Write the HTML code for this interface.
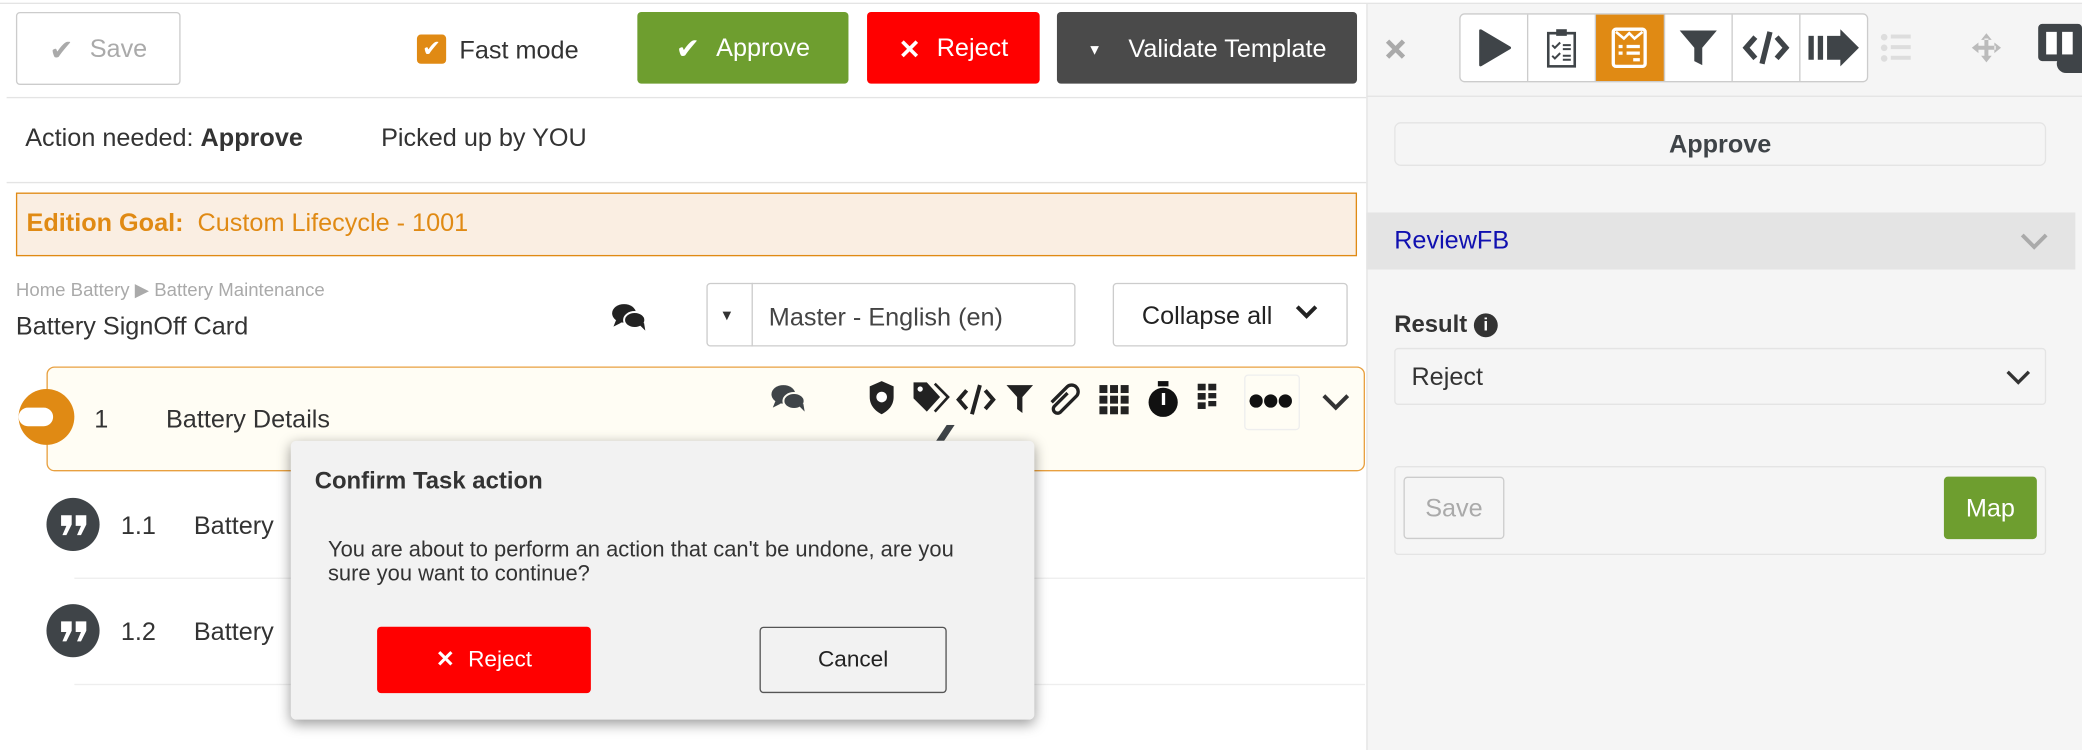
<!DOCTYPE html>
<html><head><meta charset="utf-8"><style>
html,body{margin:0;padding:0;width:2082px;height:750px;overflow:hidden;background:#fff;font-family:"Liberation Sans",sans-serif;color:#333}
#w{position:absolute;left:0;top:0;width:1568px;height:565px;transform:scale(1.32781);transform-origin:0 0;background:#fff}
.a{position:absolute}
.btn{position:absolute;border-radius:3px;display:flex;align-items:center;justify-content:center;font-size:19px;color:#fff;box-sizing:border-box}
svg{display:block}
</style></head><body><div id="w">
<div class="a" style="left:0;top:2px;width:1568px;height:1px;background:#e4e4e4"></div>
<div class="btn" style="left:12px;top:9px;width:124px;height:55px;border:1px solid #ccc;color:#aaa;padding-top:2px"><span style="font-size:22px;margin-right:12px">✔</span>Save</div>
<div class="a" style="left:314px;top:26px;width:22px;height:22px;background:#e08a14;border-radius:3px;color:#fff;font-size:17px;line-height:22px;text-align:center">✔</div>
<div class="a" style="left:346px;top:28px;font-size:19px;color:#333">Fast mode</div>
<div class="btn" style="left:480px;top:9px;width:159px;height:54px;background:#6e9e2f;padding-top:2px"><span style="font-size:22px;margin-right:12px">✔</span>Approve</div>
<div class="btn" style="left:653px;top:9px;width:130px;height:54px;background:#ff0000;padding-top:2px"><span style="font-size:20px;margin-right:12px;font-weight:bold">✕</span>Reject</div>
<div class="btn" style="left:796px;top:9px;width:226px;height:54px;background:#4a4a4a;padding-top:3px"><span style="font-size:11px;margin-right:20px">▼</span>Validate Template</div>
<div class="a" style="left:5px;top:73px;width:1024px;height:1px;background:#e4e4e4"></div>
<div class="a" style="left:19px;top:94px;font-size:19px">Action needed: <b>Approve</b></div>
<div class="a" style="left:287px;top:94px;font-size:19px">Picked up by YOU</div>
<div class="a" style="left:5px;top:137px;width:1024px;height:1px;background:#e4e4e4"></div>
<div class="a" style="left:12px;top:145px;width:1008px;height:46px;background:#faeee2;border:1px solid #e08a14"></div>
<div class="a" style="left:20px;top:158px;font-size:19px;color:#e08a14"><b>Edition Goal:</b>&nbsp; Custom Lifecycle - 1001</div>
<div class="a" style="left:12px;top:210px;font-size:14px;color:#aaa">Home Battery ▶ Battery Maintenance</div>
<div class="a" style="left:12px;top:236px;font-size:19px;color:#333">Battery SignOff Card</div>
<svg class="a" style="left:460px;top:228px" width="28" height="22"><ellipse cx="10" cy="8" rx="9" ry="7" fill="#222"/><path d="M4 13l-2 5 6-3Z" fill="#222"/><ellipse cx="18" cy="13" rx="8" ry="6" fill="#222" stroke="#fff" stroke-width="1.5"/><path d="M22 17l4 4-1-6Z" fill="#222"/></svg>
<div class="a" style="left:532px;top:213px;width:278px;height:48px;border:1px solid #ccc;border-radius:3px;box-sizing:border-box"></div>
<div class="a" style="left:566px;top:213px;width:1px;height:48px;background:#ccc"></div>
<div class="a" style="left:542px;top:232px;font-size:11px">▼</div>
<div class="a" style="left:579px;top:229px;font-size:19px;color:#444">Master - English (en)</div>
<div class="a" style="left:838px;top:213px;width:177px;height:48px;border:1px solid #ccc;border-radius:3px;box-sizing:border-box;font-size:19px;color:#222;padding:14px 0 0 21px">Collapse all</div>
<svg class="a" style="left:975px;top:229px" width="18" height="12"><path d="M2 2l7 7 7-7" stroke="#222" stroke-width="3" fill="none"/></svg>
<div class="a" style="left:35px;top:276px;width:993px;height:79px;background:#fffdf4;border:1px solid #e8a040;border-radius:6px;box-sizing:border-box"></div>
<div class="a" style="left:14px;top:293px;width:42px;height:42px;border-radius:50%;background:#e08a14"></div>
<div class="a" style="left:14px;top:307px;width:26px;height:14px;border-radius:7px;background:#fff"></div>
<div class="a" style="left:71px;top:306px;font-size:19px">1</div>
<div class="a" style="left:125px;top:306px;font-size:19px">Battery Details</div>
<svg class="a" style="left:580px;top:289px" width="28" height="22"><ellipse cx="10" cy="8" rx="9" ry="7" fill="#3f4448"/><path d="M4 13l-2 5 6-3Z" fill="#3f4448"/><ellipse cx="18" cy="13" rx="8" ry="6" fill="#3f4448" stroke="#fffdf4" stroke-width="1.5"/><path d="M22 17l4 4-1-6Z" fill="#3f4448"/></svg>
<svg class="a" style="left:652px;top:286px" width="275" height="30">
<path d="M3 5l9-4 9 4v8c0 7-5 11-9 13-4-2-9-6-9-13Z" fill="#222"/><circle cx="12" cy="13" r="4" fill="#fff"/>
<path d="M36 2h10l10 11-10 11-10-10Z" fill="#222"/><circle cx="41" cy="7" r="2" fill="#fff"/><path d="M52 3l10 10-10 11" stroke="#222" stroke-width="2" fill="none"/>
<path d="M76 8l-6 7 6 7M90 8l6 7-6 7M86 4l-6 22" stroke="#222" stroke-width="3" fill="none"/>
<path d="M106 4h20l-8 9v12l-4-3v-9Z" fill="#222"/>
<path d="M152 10l-10 10a3 3 0 0 0 5 4l12-12a5 5 0 0 0-7-7L140 17" stroke="#222" stroke-width="2.5" fill="none"/>
<g fill="#222"><rect x="176" y="4" width="6" height="6"/><rect x="184" y="4" width="6" height="6"/><rect x="192" y="4" width="6" height="6"/><rect x="176" y="12" width="6" height="6"/><rect x="184" y="12" width="6" height="6"/><rect x="192" y="12" width="6" height="6"/><rect x="176" y="20" width="6" height="6"/><rect x="184" y="20" width="6" height="6"/><rect x="192" y="20" width="6" height="6"/></g>
<circle cx="224" cy="17" r="11" fill="#111"/><rect x="220" y="1" width="8" height="4" fill="#111"/><rect x="223" y="10" width="2.5" height="9" fill="#fff"/>
<g fill="#222"><rect x="250" y="3" width="6" height="5"/><rect x="258" y="3" width="6" height="5"/><rect x="250" y="10" width="6" height="5"/><rect x="258" y="10" width="6" height="4"/><rect x="258" y="16" width="6" height="4"/><rect x="250" y="17" width="6" height="5"/></g>
</svg>
<div class="a" style="left:937px;top:282px;width:40px;height:40px;border:1px solid #eee;border-radius:3px;background:#fffdf4"></div>
<svg class="a" style="left:941px;top:296px" width="32" height="12"><circle cx="5" cy="6" r="5" fill="#111"/><circle cx="16" cy="6" r="5" fill="#111"/><circle cx="27" cy="6" r="5" fill="#111"/></svg>
<svg class="a" style="left:995px;top:296px" width="22" height="14"><path d="M2 2l9 9 9-9" stroke="#333" stroke-width="3" fill="none"/></svg>
<svg class="a" style="left:697px;top:320px" width="24" height="12"><path d="M8 12l8-12h6l-8 12Z" fill="#3f4448"/></svg>
<div class="a" style="left:35px;top:375px;width:40px;height:40px;border-radius:50%;background:#3f4448"></div>
<svg class="a" style="left:45px;top:386px" width="22" height="18"><path d="M1 2h8v7l-4 8H2l3-7H1ZM12 2h8v7l-4 8h-3l3-7h-4Z" fill="#fff"/></svg>
<div class="a" style="left:91px;top:386px;font-size:19px">1.1</div>
<div class="a" style="left:146px;top:386px;font-size:19px">Battery</div>
<div class="a" style="left:56px;top:435px;width:972px;height:1px;background:#eee"></div>
<div class="a" style="left:35px;top:455px;width:40px;height:40px;border-radius:50%;background:#3f4448"></div>
<svg class="a" style="left:45px;top:466px" width="22" height="18"><path d="M1 2h8v7l-4 8H2l3-7H1ZM12 2h8v7l-4 8h-3l3-7h-4Z" fill="#fff"/></svg>
<div class="a" style="left:91px;top:466px;font-size:19px">1.2</div>
<div class="a" style="left:146px;top:466px;font-size:19px">Battery</div>
<div class="a" style="left:56px;top:515px;width:972px;height:1px;background:#eee"></div>
<div class="a" style="left:219px;top:332px;width:560px;height:210px;background:#f2f2f2;border-radius:4px;box-shadow:0 3px 10px rgba(0,0,0,.4)">
<div class="a" style="left:18px;top:20px;font-size:18px;font-weight:bold;color:#333">Confirm Task action</div>
<div class="a" style="left:28px;top:73px;width:495px;font-size:16.5px;line-height:18px;color:#333">You are about to perform an action that can't be undone, are you sure you want to continue?</div>
<div class="btn" style="left:65px;top:140px;width:161px;height:50px;background:#ff0000;font-size:17px"><b style="margin-right:10px">✕</b>Reject</div>
<div class="btn" style="left:353px;top:140px;width:141px;height:50px;border:1px solid #555;color:#222;font-size:17px;background:#f2f2f2">Cancel</div>
</div>
<div class="a" style="left:1029px;top:3px;width:539px;height:562px;background:#f5f5f5;border-left:1px solid #e4e4e4"></div>
<div class="a" style="left:1029px;top:72px;width:539px;height:1px;background:#e4e4e4"></div>
<svg class="a" style="left:1043px;top:29px" width="16" height="16"><path d="M2 2l12 12M14 2L2 14" stroke="#aaa" stroke-width="3.5"/></svg>
<div class="a" style="left:1099px;top:10px;width:308px;height:52px;background:#fff;border:1px solid #ccc;border-radius:4px;box-sizing:border-box;display:flex">
<div style="flex:1;border-right:1px solid #ccc;display:flex;align-items:center;justify-content:center"><svg width="26" height="28"><path d="M3 1 L25 14 L3 27Z" fill="#3f4448" stroke="#3f4448" stroke-linejoin="round" stroke-width="2"/></svg></div>
<div style="flex:1;border-right:1px solid #ccc;display:flex;align-items:center;justify-content:center"><svg width="22" height="30"><rect x="1" y="4" width="20" height="25" fill="#fff" stroke="#3f4448" stroke-width="2"/><rect x="7" y="1" width="8" height="5" fill="#3f4448"/><path d="M4 13l2 2 4-4M4 21l2 2 4-4" stroke="#3f4448" fill="none" stroke-width="1.5"/><path d="M12 13h6M12 16h6M12 21h6M12 24h6" stroke="#3f4448" stroke-width="1.5"/></svg></div>
<div style="flex:1;border-right:1px solid #ccc;background:#e08a14;display:flex;align-items:center;justify-content:center"><svg width="28" height="32"><rect x="2" y="2" width="24" height="28" rx="2" fill="none" stroke="#fff" stroke-width="2.5"/><path d="M4 4l6 5 4-4 4 4 6-5" stroke="#fff" fill="none" stroke-width="2"/><path d="M6 15h3M12 15h10M6 20h3M12 20h10M17 25h5" stroke="#fff" stroke-width="2.5"/></svg></div>
<div style="flex:1;border-right:1px solid #ccc;display:flex;align-items:center;justify-content:center"><svg width="30" height="30"><path d="M1 2h28L18 15v13l-6-3V15Z" fill="#3f4448"/></svg></div>
<div style="flex:1;border-right:1px solid #ccc;display:flex;align-items:center;justify-content:center"><svg width="36" height="30"><path d="M10 7L3 15l7 8M26 7l7 8-7 8M21 3L15 27" stroke="#3f4448" stroke-width="4" fill="none"/></svg></div>
<div style="flex:1;display:flex;align-items:center;justify-content:center"><svg width="40" height="30"><rect x="1" y="6" width="4" height="18" fill="#3f4448"/><rect x="8" y="6" width="4" height="18" fill="#3f4448"/><path d="M15 6h10V1l14 14-14 14v-5H15Z" fill="#3f4448"/></svg></div>
</div>
<svg class="a" style="left:1416px;top:25px" width="24" height="22"><g fill="#ddd"><circle cx="3" cy="3" r="2.5"/><circle cx="3" cy="11" r="2.5"/><circle cx="3" cy="19" r="2.5"/><rect x="8" y="1" width="15" height="3"/><rect x="8" y="9" width="15" height="3"/><rect x="8" y="17" width="15" height="3"/></g></svg>
<svg class="a" style="left:1484px;top:24px" width="24" height="24"><path d="M12 1l-4 5h8ZM12 23l-4-5h8ZM1 12l5-4v8ZM23 12l-5-4v8Z M10.5 5h3v14h-3Z M5 10.5h14v3H5Z" fill="#bbb"/></svg>
<div class="a" style="left:1535px;top:18px;width:33px;height:28px;background:#3f4448;border-radius:3px"></div>
<div class="a" style="left:1541px;top:24px;width:8px;height:17px;background:#fff"></div>
<div class="a" style="left:1553px;top:24px;width:8px;height:17px;background:#fff"></div>
<div class="a" style="left:1549px;top:41px;width:19px;height:14px;background:#3f4448;border-radius:10px 0 0 10px"></div>
<div class="a" style="left:1050px;top:92px;width:491px;height:33px;border:1px solid #e4e4e4;border-radius:5px;box-sizing:border-box;text-align:center;font-size:19px;font-weight:bold;line-height:33px;color:#3f4448">Approve</div>
<div class="a" style="left:1029px;top:160px;width:534px;height:43px;background:#e4e4e4"></div>
<div class="a" style="left:1050px;top:171px;font-size:19px;color:#1010b0">ReviewFB</div>
<svg class="a" style="left:1521px;top:175px" width="22" height="14"><path d="M2 2l9 9 9-9" stroke="#aaa" stroke-width="3" fill="none"/></svg>
<div class="a" style="left:1050px;top:234px;font-size:18px;font-weight:bold;color:#333">Result <span style="display:inline-block;width:18px;height:18px;border-radius:50%;background:#333;color:#fff;font-size:13px;text-align:center;line-height:18px;vertical-align:1px">i</span></div>
<div class="a" style="left:1050px;top:262px;width:491px;height:43px;background:#f5f5f5;border:1px solid #e4e4e4;border-radius:3px;box-sizing:border-box;font-size:19px;padding:11px 0 0 12px;color:#333">Reject</div>
<svg class="a" style="left:1510px;top:278px" width="20" height="13"><path d="M2 2l8 8 8-8" stroke="#333" stroke-width="2.5" fill="none"/></svg>
<div class="a" style="left:1050px;top:351px;width:491px;height:67px;border:1px solid #e4e4e4;border-radius:3px;box-sizing:border-box"></div>
<div class="btn" style="left:1057px;top:359px;width:76px;height:47px;border:1px solid #ccc;color:#aaa;padding-top:2px">Save</div>
<div class="btn" style="left:1464px;top:359px;width:70px;height:47px;background:#6e9e2f;padding-top:2px">Map</div>
</div></body></html>
